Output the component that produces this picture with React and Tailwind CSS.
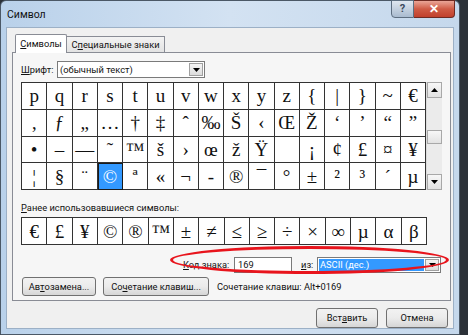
import React from "react";

const rows = [
  ["p","q","r","s","t","u","v","w","x","y","z","{","|","}","~","€"],
  ["‚","ƒ","„","…","†","‡","ˆ","‰","Š","‹","Œ","Ž","‘","’","“","”"],
  ["•","–","—","˜","™","š","›","œ","ž","Ÿ","","¡","¢","£","¤","¥"],
  ["¦","§","¨","©","ª","«","¬","-","®","¯","°","±","²","³","´","µ"],
];
const recent = ["€","£","¥","©","®","™","±","≠","≤","≥","÷","×","∞","µ","α","β"];

function Cell({ ch, selected }) {
  return (
    <div
      className={
        "flex items-center justify-center border-r border-b border-[#333] font-['Liberation_Serif'] text-[19px] leading-none " +
        (selected ? "bg-[#3399ff] text-white outline outline-1 outline-[#1a1a1a] -outline-offset-1" : "text-[#111]")
      }
    >
      {ch}
    </div>
  );
}

function Arrow({ dir }) {
  return (
    <svg width="7" height="4" viewBox="0 0 7 4">
      {dir === "up" ? <path d="M0 4 L3.5 0 L7 4 Z" fill="#000" /> : <path d="M0 0 L7 0 L3.5 4 Z" fill="#000" />}
    </svg>
  );
}

function Btn({ children, className = "" }) {
  return (
    <div className={"flex items-center justify-center whitespace-nowrap border border-[#707070] rounded-[3px] bg-gradient-to-b from-[#f2f2f2] via-[#ebebeb] to-[#d6d6d6] text-[#111] " + className}>
      {children}
    </div>
  );
}

export default function App() {
  return (
    <div className="relative w-[468px] h-[335px] overflow-hidden flex bg-[#2b3138] font-['Roboto',sans-serif] text-[9.3px] text-[#111] whitespace-nowrap">
      <div className="w-[460px] h-full flex flex-col rounded-tl-[6px] rounded-tr-[6px] border border-[#4b5866] bg-gradient-to-r from-[#b9d1ea] via-[#d3e2f2] to-[#c5d8ec]">
        {/* title bar */}
        <div className="h-[26px] flex items-start shrink-0">
          <div className="pl-[6px] pt-[7px] text-[10.5px] leading-[14px] text-[#111]">Символ</div>
          <div className="flex-1" />
          <div className="flex mr-[4px] -mt-px">
            <div className="w-[23px] h-[18px] flex items-center justify-center border border-[#5d6e80] rounded-bl-[4px] bg-gradient-to-b from-[#dfe7f0] to-[#a9bbcf] text-[11px] font-bold text-[#3b4a5c]">?</div>
            <div className="w-[41px] h-[18px] flex items-center justify-center border border-l-0 border-[#6e2a22] rounded-br-[4px] bg-gradient-to-b from-[#e9a597] via-[#cf5b45] to-[#c1402c] text-white font-bold text-[12px]">✕</div>
          </div>
        </div>
        {/* client */}
        <div className="flex-1 mx-[5px] mb-[5px] bg-[#f0f0f0] border border-[#9cb0c6] flex flex-col">
          {/* tabs */}
          <div className="flex items-end ml-[8px] mt-[5px] h-[19px]">
            <div className="w-[52px] h-[19px] flex items-center justify-center bg-white border border-b-0 border-[#898c95] rounded-t-[2px] relative z-10 -mb-px">
              <span><u>С</u>имволы</span>
            </div>
            <div className="w-[98px] h-[16px] flex items-center justify-center bg-gradient-to-b from-[#f3f3f3] to-[#e3e3e3] border border-l-0 border-b-0 border-[#898c95]">
              <span>С<u>п</u>ециальные знаки</span>
            </div>
          </div>
          {/* panel */}
          <div className="ml-[5px] w-[439px] h-[249px] border border-[#898c95] bg-[#f6f6f6] flex flex-col pl-[8px] pt-[8px]">
            <div className="flex items-center h-[17px]">
              <span className="w-[36px]"><u>Ш</u>рифт:</span>
              <div className="w-[148px] h-[17px] bg-white border border-[#7a7a7a] flex items-center pl-[2px]">
                <span className="flex-1">(обычный текст)</span>
                <div className="w-[14px] h-[13px] mr-px flex items-center justify-center border border-[#a0a0a0] bg-gradient-to-b from-[#f4f4f4] to-[#dcdcdc]">
                  <Arrow dir="down" />
                </div>
              </div>
            </div>
            {/* grid + scrollbar */}
            <div className="flex mt-[4px] h-[108px]">
              <div className="w-[405px] h-[108px] grid grid-cols-16 grid-rows-4 border-l border-t border-[#333] bg-white">
                {rows.flat().map((ch, i) => (
                  <Cell key={i} ch={ch} selected={ch === "©"} />
                ))}
              </div>
              <div className="w-[16px] h-[108px] flex flex-col bg-[#ebebeb] border-l border-[#dcdcdc]">
                <div className="h-[16px] flex items-center justify-center border border-[#a8a8a8] bg-gradient-to-b from-[#f7f7f7] to-[#e2e2e2]"><Arrow dir="up" /></div>
                <div className="h-[32px]" />
                <div className="h-[14px] border border-[#a8a8a8] bg-gradient-to-b from-[#f7f7f7] to-[#e2e2e2]" />
                <div className="flex-1" />
                <div className="h-[16px] flex items-center justify-center border border-[#a8a8a8] bg-gradient-to-b from-[#f7f7f7] to-[#e2e2e2]"><Arrow dir="down" /></div>
              </div>
            </div>
            <div className="mt-[11px] h-[14px] leading-[14px]"><u>Р</u>анее использовавшиеся символы:</div>
            <div className="mt-[2px] w-[406px] h-[28px] grid grid-cols-16 border-l border-t border-[#333] bg-white">
              {recent.map((ch, i) => (
                <Cell key={i} ch={ch} />
              ))}
            </div>
            <div className="mt-[12px] h-[16px] flex items-center">
              <span className="ml-[162px] w-[51px]"><u>К</u>од знака:</span>
              <div className="w-[58px] h-[16px] bg-white border border-[#7a7a7a] flex items-center pl-[3px]">169</div>
              <span className="ml-[9px] w-[16px]"><u>и</u>з:</span>
              <div className="w-[124px] h-[16px] bg-white border border-[#7a7a7a] flex items-center p-px">
                <div className="flex-1 h-full bg-[#3399ff] text-white flex items-center pl-[1px]">ASCII (дес.)</div>
                <div className="w-[14px] h-full ml-px flex items-center justify-center border border-[#a0a0a0] bg-gradient-to-b from-[#f4f4f4] to-[#dcdcdc]">
                  <Arrow dir="down" />
                </div>
              </div>
            </div>
            <div className="mt-[4px] h-[19px] flex items-center">
              <Btn className="w-[74px] h-[19px] ml-px">Ав<u>т</u>озамена...</Btn>
              <Btn className="w-[106px] h-[19px] ml-[7px]">Со<u>ч</u>етание клавиш...</Btn>
              <span className="ml-[8px]">Сочетание клавиш: Alt+0169</span>
            </div>
          </div>
          {/* bottom buttons */}
          <div className="flex mt-[7px] ml-[309px]">
            <Btn className="w-[62px] h-[20px]">Вст<u>а</u>вить</Btn>
            <Btn className="w-[62px] h-[20px] ml-[8px]">Отмена</Btn>
          </div>
        </div>
      </div>
      {/* annotation ellipse */}
      <div className="absolute left-[170px] top-[246px] w-[279px] h-[28px] rounded-[50%] border-[3px] border-[#e8141c]" />
    </div>
  );
}
